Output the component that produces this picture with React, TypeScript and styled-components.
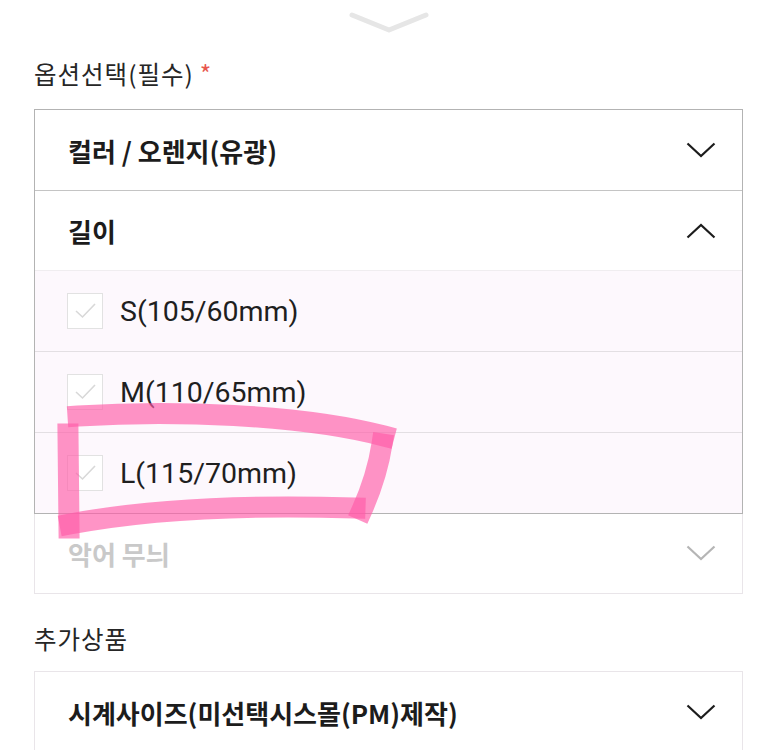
import styled, { createGlobalStyle } from "styled-components";

const GlobalStyle = createGlobalStyle`
	body {
		margin: 0;
		background: #ffffff;
		font-family: Roboto, "Noto Sans CJK KR", sans-serif;
		color: #222;
	}
`;

const Page = styled.div`
	position: relative;
	width: 775px;
	height: 750px;
	overflow: hidden;
	padding: 0 32px 0 34px;
	box-sizing: border-box;
`;

const Handle = styled.div`
	height: 57px;
	display: flex;
	justify-content: center;
	align-items: flex-start;
	padding-top: 12px;
	box-sizing: border-box;
`;

const Label = styled.div<{ $top?: number }>`
	font-family: "Noto Sans CJK KR", sans-serif;
	font-size: 24.5px;
	line-height: 34px;
	letter-spacing: 1px;
	color: #262626;
	margin-top: ${(p) => p.$top ?? 0}px;
	margin-bottom: ${(p) => (p.$top ? 15 : 18)}px;
`;

const Star = styled.span`
	color: #e8574d;
	margin-left: 6px;
`;

const SelectBox = styled.div<{ $faint?: boolean }>`
	border: 1.5px solid ${(p) => (p.$faint ? "#e9e5e9" : "#b3b3b3")};
	position: relative;
	z-index: ${(p) => (p.$faint ? 0 : 1)};
	background: #fff;
`;

const UnderBox = styled(SelectBox)`
	border-top: none;
	margin-top: -1px;
`;

const Row = styled.div<{ $divider?: string; $muted?: boolean }>`
	height: 80px;
	box-sizing: border-box;
	display: flex;
	align-items: center;
	justify-content: space-between;
	padding: 0 26px 0 33px;
	border-top: ${(p) => (p.$divider ? `1.5px solid ${p.$divider}` : "none")};
	font-family: "Noto Sans CJK KR", sans-serif;
	font-size: 26px;
	font-weight: 700;
	color: ${(p) => (p.$muted ? "#c9c9c9" : "#1c1c1c")};
`;

const OptionRow = styled.div`
	height: 81px;
	box-sizing: border-box;
	display: flex;
	align-items: center;
	gap: 17px;
	padding-left: 32px;
	background: #fdf8fd;
	border-top: 1.5px solid #e3dfe3;
	font-family: Roboto, "Noto Sans CJK KR", sans-serif;
	font-size: 28.5px;
	color: #1f1f1f;

	&:first-child {
		border-top-color: #f0edf0;
	}
`;

const CheckBox = styled.div`
	width: 36px;
	height: 36px;
	box-sizing: border-box;
	border: 1.5px solid #e2e2e2;
	background: #fff;
	display: flex;
	align-items: center;
	justify-content: center;
`;

const Overlay = styled.svg`
	position: absolute;
	left: 0;
	top: 0;
	pointer-events: none;
	z-index: 5;
`;

function Chevron({ up, color = "#1c1c1c" }: { up?: boolean; color?: string }) {
	return (
		<svg width="30" height="16" viewBox="0 0 30 16">
			<path
				d={up ? "M1.5 14.5 L15 2 L28.5 14.5" : "M1.5 1.5 L15 14 L28.5 1.5"}
				fill="none"
				stroke={color}
				strokeWidth="2.2"
			/>
		</svg>
	);
}

const options = ["S(105/60mm)", "M(110/65mm)", "L(115/70mm)"];

export default function App() {
	return (
		<Page>
			<GlobalStyle />
			<Handle>
				<svg width="80" height="22" viewBox="0 0 80 22">
					<path
						d="M3 3 L40 18 L77 3"
						fill="none"
						stroke="#e6e6e6"
						strokeWidth="5"
						strokeLinecap="round"
						strokeLinejoin="round"
					/>
				</svg>
			</Handle>
			<Label>
				옵션선택(필수)
				<Star>*</Star>
			</Label>
			<SelectBox>
				<Row>
					<span>컬러 / 오렌지(유광)</span>
					<Chevron />
				</Row>
				<Row $divider="#c4c4c4">
					<span>길이</span>
					<Chevron up />
				</Row>
				<div>
					{options.map((o) => (
						<OptionRow key={o}>
							<CheckBox>
								<svg width="30" height="30" viewBox="0 0 30 30">
									<path d="M6 15 L12.5 21 L25 8" fill="none" stroke="#d8d8d8" strokeWidth="1.6" />
								</svg>
							</CheckBox>
							<span>{o}</span>
						</OptionRow>
					))}
				</div>
			</SelectBox>
			<UnderBox $faint>
				<Row $muted>
					<span>악어 무늬</span>
					<Chevron color="#b5b5b5" />
				</Row>
			</UnderBox>
			<Label $top={28}>추가상품</Label>
			<SelectBox $faint>
				<Row>
					<span>시계사이즈(미선택시스몰(PM)제작)</span>
					<Chevron />
				</Row>
			</SelectBox>
			<Overlay width="775" height="750" viewBox="0 0 775 750">
				<g fill="none" stroke="#ff5aa8" strokeOpacity="0.65" strokeWidth="21" strokeLinecap="square" strokeLinejoin="round">
					<path d="M78 416 C170 410 300 414 384 436" />
					<path d="M382 444 C378 470 370 492 362 510" />
					<path d="M355 508 C260 505 160 507 70 524" />
					<path d="M68 434 L69 528" />
				</g>
			</Overlay>
		</Page>
	);
}
